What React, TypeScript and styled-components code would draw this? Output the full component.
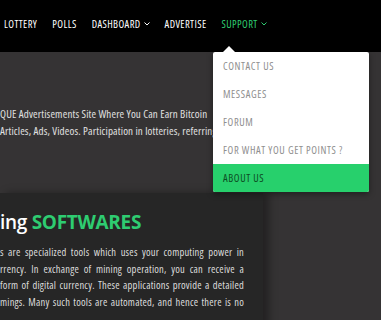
import { FC } from 'react';
import styled, { createGlobalStyle } from 'styled-components';

const GlobalStyle = createGlobalStyle`
  html, body {
    margin: 0;
    padding: 0;
    background: #353334;
    font-family: 'Open Sans', 'DejaVu Sans', sans-serif;
    overflow: hidden;
  }
`;

const Page = styled.div`
  width: 381px;
  height: 320px;
  position: relative;
  overflow: hidden;
`;

const Nav = styled.nav`
  height: 52px;
  background: #000;
  display: flex;
  align-items: center;
  padding-left: 4px;
  gap: 15px;
`;

const NavItem = styled.div<{ $active?: boolean }>`
  display: flex;
  align-items: center;
  gap: 3px;
  font-size: 10.5px;
  font-stretch: condensed;
  letter-spacing: 0.4px;
  color: ${(p) => (p.$active ? '#2ecc71' : '#fff')};
  margin-top: -5px;
`;

const Chevron: FC = () => (
  <svg width='6' height='4' viewBox='0 0 6 4' fill='none' stroke='currentColor' strokeWidth='1'>
    <polyline points='0.5,0.5 3,3 5.5,0.5' />
  </svg>
);

const Dropdown = styled.div`
  position: absolute;
  top: 52px;
  left: 213px;
  width: 156px;
  background: #fff;
  border-radius: 2px;
  box-shadow: 0 2px 6px rgba(0, 0, 0, 0.4);
  z-index: 5;

  &::before {
    content: '';
    position: absolute;
    top: -6px;
    left: 10px;
    border-left: 6px solid transparent;
    border-right: 6px solid transparent;
    border-bottom: 6px solid #fff;
  }
`;

const DropItem = styled.div<{ $active?: boolean }>`
  height: 28px;
  display: flex;
  align-items: center;
  padding-left: 10px;
  font-size: 10.5px;
  font-stretch: condensed;
  letter-spacing: 0.6px;
  color: ${(p) => (p.$active ? '#0d4d24' : '#8f8f8f')};
  background: ${(p) => (p.$active ? '#27d06c' : 'transparent')};
  border-radius: ${(p) => (p.$active ? '0 0 2px 2px' : '0')};
`;

const Hero = styled.section`
  padding-top: 53px;
  height: 88px;
`;

const HeroLine = styled.p`
  margin: 0;
  font-size: 11px;
  font-stretch: condensed;
  line-height: 17px;
  color: #e0e0e0;
  letter-spacing: 0.15px;
  white-space: nowrap;
`;

const Card = styled.article`
  width: 263px;
  height: 140px;
  background: #262626;
  box-shadow: 6px 0 8px rgba(0, 0, 0, 0.35);
  padding-top: 16px;
  box-sizing: border-box;
`;

const Heading = styled.h2`
  margin: 0 0 9px;
  font-size: 19px;
  font-weight: 600;
  letter-spacing: -0.3px;
  color: #fff;
  line-height: 26px;

  span {
    color: #2ecc71;
    font-weight: 700;
  }
`;

const BodyLine = styled.p`
  margin: 0;
  width: 244px;
  font-size: 10.5px;
  font-stretch: condensed;
  line-height: 16.5px;
  color: #dcdcdc;
  text-align: justify;
  text-align-last: justify;
  letter-spacing: 0.2px;
  white-space: nowrap;
`;

const navItems = [
  { label: 'LOTTERY' },
  { label: 'POLLS' },
  { label: 'DASHBOARD', caret: true },
  { label: 'ADVERTISE' },
  { label: 'SUPPORT', caret: true, active: true },
];

const menu = ['CONTACT US', 'MESSAGES', 'FORUM', 'FOR WHAT YOU GET POINTS ?', 'ABOUT US'];

const body = [
  's are specialized tools which uses your computing power in',
  'rrency. In exchange of mining operation, you can receive a',
  'form of digital currency. These applications provide a detailed',
  'mings. Many such tools are automated, and hence there is no',
];

const App: FC = () => (
  <Page>
    <GlobalStyle />
    <Nav>
      {navItems.map((n) => (
        <NavItem key={n.label} $active={n.active}>
          {n.label}
          {n.caret && <Chevron />}
        </NavItem>
      ))}
    </Nav>
    <Dropdown>
      {menu.map((m, i) => (
        <DropItem key={m} $active={i === menu.length - 1}>
          {m}
        </DropItem>
      ))}
    </Dropdown>
    <Hero>
      <HeroLine>QUE Advertisements Site Where You Can Earn Bitcoin</HeroLine>
      <HeroLine>Articles, Ads, Videos. Participation in lotteries, referring</HeroLine>
    </Hero>
    <Card>
      <Heading>
        ing <span>SOFTWARES</span>
      </Heading>
      {body.map((l) => (
        <BodyLine key={l}>{l}</BodyLine>
      ))}
    </Card>
  </Page>
);

export default App;
